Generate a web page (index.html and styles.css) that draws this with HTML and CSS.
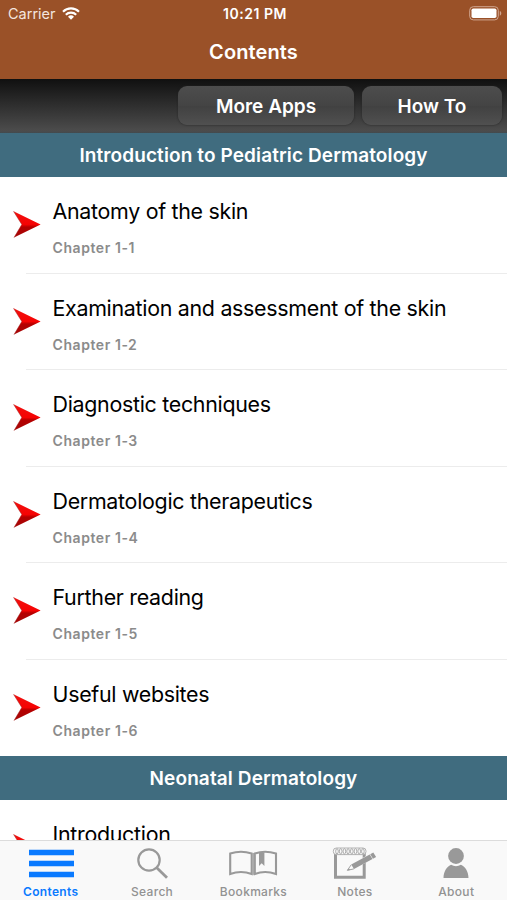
FILE: index.html
```html
<!DOCTYPE html>
<html lang="en">
<head>
<meta charset="utf-8">
<title>Contents</title>
<link rel="stylesheet" href="styles.css">
</head>
<body>
<svg class="defs" aria-hidden="true">
  <defs>
    <linearGradient id="red" x1="0" y1="0" x2="0" y2="1">
      <stop offset="0" stop-color="#f01210"/><stop offset=".5" stop-color="#f60303"/><stop offset=".6" stop-color="#b50000"/><stop offset="1" stop-color="#a30808"/>
    </linearGradient>
    <symbol id="arrow" viewBox="0 0 28 27"><path d="M.5.3 27.6 13.5 1 26.6 8.8 13.5Z" fill="url(#red)"/><path d="M1 26.6 8.8 13.5.5.3" fill="none" stroke="#a02020" stroke-width=".5"/></symbol>
  </defs>
</svg>
<div class="app">
  <header class="top">
    <div class="status">
      <div class="carrier"><span>Carrier</span>
        <svg class="wifi" width="18" height="13" viewBox="0 0 18 13"><g fill="none" stroke="#fff" stroke-width="2.1"><path d="M1 4.7a11.3 11.3 0 0 1 16 0"/><path d="M3.8 7.8a7.4 7.4 0 0 1 10.4 0"/></g><path d="M6 9.8a4.3 4.3 0 0 1 6 0L9 12.8Z" fill="#fff"/></svg>
      </div>
      <div class="time">10:21 PM</div>
      <svg class="battery" width="33" height="15" viewBox="0 0 33 15"><rect x=".7" y=".7" width="28.6" height="13.2" rx="3.6" fill="none" stroke="#d0a58f" stroke-width="1"/><rect x="2.5" y="2.5" width="25" height="9.6" rx="1.8" fill="#fff"/><path d="M30.8 5c2 .7 2 4 0 4.7Z" fill="#d0a58f"/></svg>
    </div>
    <h1>Contents</h1>
  </header>
  <nav class="toolbar"><button class="more">More Apps</button><button class="how">How To</button></nav>
  <main class="list">
    <h2>Introduction to Pediatric Dermatology</h2>
    <ul>
      <li><svg class="arrow"><use href="#arrow"/></svg><div class="row"><p>Anatomy of the skin</p><small>Chapter 1-1</small></div></li>
      <li><svg class="arrow"><use href="#arrow"/></svg><div class="row"><p>Examination and assessment of the skin</p><small>Chapter 1-2</small></div></li>
      <li><svg class="arrow"><use href="#arrow"/></svg><div class="row"><p>Diagnostic techniques</p><small>Chapter 1-3</small></div></li>
      <li><svg class="arrow"><use href="#arrow"/></svg><div class="row"><p>Dermatologic therapeutics</p><small>Chapter 1-4</small></div></li>
      <li><svg class="arrow"><use href="#arrow"/></svg><div class="row"><p>Further reading</p><small>Chapter 1-5</small></div></li>
      <li><svg class="arrow"><use href="#arrow"/></svg><div class="row"><p>Useful websites</p><small>Chapter 1-6</small></div></li>
    </ul>
    <h2>Neonatal Dermatology</h2>
    <ul>
      <li><svg class="arrow"><use href="#arrow"/></svg><div class="row"><p>Introduction</p></div></li>
    </ul>
  </main>
  <footer class="tabs">
    <a class="tab active"><svg width="52" height="36" viewBox="0 0 52 36"><path d="M4 8.5h45M4 19.5h45M4 30.5h45" stroke="#0a7aff" stroke-width="5.6"/></svg><span>Contents</span></a>
    <a class="tab"><svg width="52" height="36" viewBox="0 0 52 36" fill="none" stroke="#999"><circle cx="23" cy="16" r="10.7" stroke-width="2.2"/><path d="M30.5 23.5 41 33.7" stroke-width="2.8"/></svg><span>Search</span></a>
    <a class="tab"><svg width="52" height="36" viewBox="0 0 52 36"><path d="M3.2 9.6Q14 6 24.7 9.6V30Q14 26 3.2 30ZM27.8 9.6Q38 6 49 9.6V30Q38 26 27.8 30Z" fill="none" stroke="#999" stroke-width="2.1"/><path d="M26.2 9v21.8" stroke="#aaa" stroke-width="1.8"/><path d="M32 8.5h5.4v13.6l-2.7-2.8-2.7 2.8Z" fill="#999"/></svg><span>Bookmarks</span></a>
    <a class="tab"><svg width="52" height="36" viewBox="0 0 52 36"><path d="M6.5 8v25.3h28.7V8" fill="none" stroke="#999" stroke-width="3"/><rect x="4.3" y="4" width="32.7" height="6.6" rx="3" fill="#f9f9f9" stroke="#aaa" stroke-width=".9"/><g fill="none" stroke="#999" stroke-width=".8"><ellipse cx="8" cy="7.3" rx="1.3" ry="2.6"/><ellipse cx="11.7" cy="7.3" rx="1.3" ry="2.6"/><ellipse cx="15.4" cy="7.3" rx="1.3" ry="2.6"/><ellipse cx="19.1" cy="7.3" rx="1.3" ry="2.6"/><ellipse cx="22.8" cy="7.3" rx="1.3" ry="2.6"/><ellipse cx="26.5" cy="7.3" rx="1.3" ry="2.6"/><ellipse cx="30.2" cy="7.3" rx="1.3" ry="2.6"/><ellipse cx="33.9" cy="7.3" rx="1.3" ry="2.6"/></g><path d="M17.5 26.8 22 20.2 44.3 8.2 47.3 12.6 25.3 25.3Z" fill="#f9f9f9"/><path d="m22.2 20.5 18.5-10 2.8 4.6-18.5 10ZM41.2 10.2l3.1-1.8 2.8 4.5-3.1 1.8Z" fill="#999"/><path d="m22.2 20.8-3.8 5.5 6.5-1.4" fill="none" stroke="#999" stroke-width=".9"/><path d="m18 26.6 2-2.2 1.2 1.5Z" fill="#999"/></svg><span>Notes</span></a>
    <a class="tab"><svg width="52" height="36" viewBox="0 0 52 36" fill="#999"><circle cx="26" cy="12" r="7.9"/><path d="M13.5 34c0-7 3.8-11.8 7.6-13.3 3 1.9 6.8 1.9 9.8 0C34.7 22.2 38.5 27 38.5 34Z"/></svg><span>About</span></a>
  </footer>
</div>
</body>
</html>
```
FILE: styles.css
```css
* { box-sizing: border-box; margin: 0; padding: 0; }
body { width: 507px; height: 900px; overflow: hidden; background: #fff; font-family: Inter, "Liberation Sans", sans-serif; }
.defs { position: absolute; width: 0; height: 0; }
.app { display: flex; flex-direction: column; height: 900px; }
.top { flex: none; height: 79px; background: #9a5128; color: #fff; text-align: center; }
.status { display: grid; grid-template-columns: 1fr auto 1fr; align-items: center; height: 27px; padding: 0 5px 0 8px; font-size: 14.5px; }
.carrier { display: flex; align-items: center; gap: 6px; color: #f3e5df; }
.wifi { margin-top: -1px; }
.time { font-weight: 600; font-size: 14px; letter-spacing: .55px; }
.battery { justify-self: end; }
h1 { font-size: 20px; line-height: 51px; font-weight: 600; letter-spacing: .1px; }
.toolbar { flex: none; height: 54px; display: flex; justify-content: flex-end; gap: 8px; padding: 7px 5px 0; background: linear-gradient(#101010, #4c4c4c 96%, #424a4e); }
button { height: 39px; padding-top: 2px; border: 0; border-radius: 9px; background: linear-gradient(#4d4d4d, #444 50%, #414141 51%, #505050); box-shadow: 0 0 2px #222; color: #fff; font: 600 19px Inter, sans-serif; }
.more { width: 176px; }
.how { width: 140px; }
.list { flex: 1; min-height: 0; overflow: hidden; }
h2 { height: 44px; line-height: 45px; background: #406c7f; color: #fff; font-size: 19px; font-weight: 600; letter-spacing: .11px; text-align: center; }
ul { list-style: none; }
li { display: flex; height: 96.5px; padding-left: 13px; background: linear-gradient(#ececec, #ececec) 26px 100% / 100% 1px no-repeat; }
li:last-child { background: none; }
.arrow { flex: none; width: 28px; height: 27px; margin-top: 34px; }
.row { padding: 20px 0 0 11.5px; white-space: nowrap; }
p { font-size: 21.4px; line-height: 29px; letter-spacing: -.29px; color: #000; }
small { display: block; margin-top: 12px; font-size: 14px; line-height: 20px; font-weight: 600; letter-spacing: .57px; color: #8b8b8b; }
.tabs { flex: none; height: 60px; display: grid; grid-template-columns: repeat(5, 1fr); border-top: 1px solid #dcdcdc; background: #f9f9f9; }
.tab { display: flex; flex-direction: column; align-items: center; padding-top: 3px; color: #929292; font-size: 12px; font-weight: 500; line-height: 17px; letter-spacing: .3px; }
.tab svg { flex: none; margin-bottom: 3px; }
.active { color: #0a7aff; font-weight: 600; }
```
